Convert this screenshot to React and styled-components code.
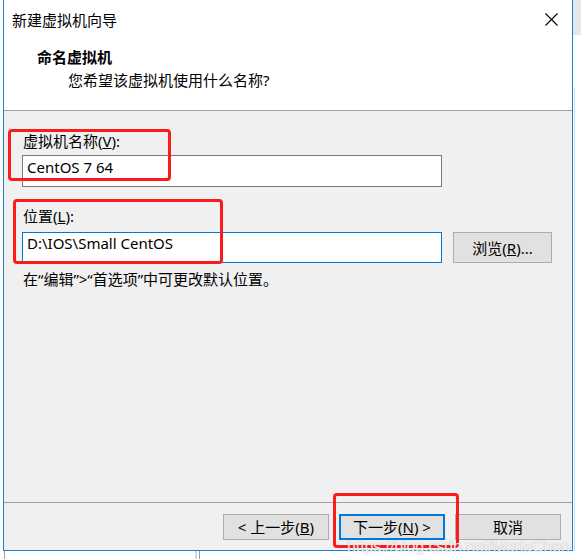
import React from "react";
import styled, { createGlobalStyle } from "styled-components";

const Global = createGlobalStyle`
  html, body { margin: 0; padding: 0; background: #ffffff; }
  body { font-family: "Noto Sans", "Noto Sans CJK SC", sans-serif; font-size: 15px; color: #000; }
  * { box-sizing: border-box; }
`;

const Page = styled.div`
  position: relative;
  width: 581px;
  height: 559px;
  overflow: hidden;
  display: flex;
  flex-direction: column;
  background: #ffffff;
`;

const MainRow = styled.div`
  display: flex;
  height: 551px;
`;

const LeftGap = styled.div`
  width: 3px;
  flex: none;
`;

const Window = styled.div`
  width: 570px;
  flex: none;
  display: flex;
  flex-direction: column;
  border-left: 1px solid #1a7fd4;
  border-right: 1px solid #1a7fd4;
  border-bottom: 1px solid #1a7fd4;
  background: #ffffff;
`;

const RightStrip = styled.div`
  flex: 1;
  display: flex;
  flex-direction: column;
`;

const StripTop = styled.div`
  height: 35px;
  background: #e6e6e6;
`;

const StripGap = styled.div`
  height: 53px;
`;

const StripLine = styled.div`
  flex: 1;
  margin-left: 1px;
  border-left: 1px solid #dadada;
`;

const BottomStrip = styled.div`
  height: 8px;
  display: flex;
`;

const VLine = styled.div`
  width: ${(p) => p.$w || 1}px;
  margin-left: ${(p) => p.$at}px;
  background: ${(p) => p.$c};
`;

const TitleBar = styled.div`
  height: 39px;
  display: flex;
  align-items: center;
  justify-content: space-between;
  padding-left: 8px;
  padding-right: 14px;
  line-height: 20px;
`;

const TitleText = styled.div`
  font-size: 15px;
  color: #000;
`;

const Header = styled.div`
  height: 72px;
  padding: 8px 0 0 33px;
  border-bottom: 1px solid #a0a0a0;
`;

const Heading = styled.div`
  font-weight: 700;
  line-height: 20px;
`;

const SubHeading = styled.div`
  line-height: 20px;
  margin-top: 3px;
  padding-left: 31px;
`;

const Content = styled.div`
  height: 392px;
  background: #f0f0f0;
  border-bottom: 1px solid #a0a0a0;
  padding: 20px 0 0 18px;
  display: flex;
  flex-direction: column;
`;

const Label = styled.div`
  line-height: 20px;
  padding-left: 1px;
  margin-top: ${(p) => p.$mt || 0}px;
  margin-bottom: ${(p) => p.$mb || 0}px;
`;

const TextBox = styled.div`
  width: 420px;
  height: ${(p) => p.$h}px;
  background: #ffffff;
  border: 1px solid ${(p) => (p.$focus ? "#0078d7" : "#7a7a7a")};
  padding: ${(p) => p.$pt}px 0 0 4px;
  line-height: 20px;
  white-space: nowrap;
`;

const Row = styled.div`
  display: flex;
  align-items: flex-start;
  gap: 11px;
`;

const Button = styled.div`
  width: ${(p) => p.$w}px;
  height: ${(p) => p.$h}px;
  background: #e1e1e1;
  border: ${(p) => (p.$default ? "2px solid #0078d7" : "1px solid #adadad")};
  display: flex;
  align-items: center;
  justify-content: center;
  line-height: 20px;
  white-space: nowrap;
  flex: none;
`;

const Hint = styled.div`
  line-height: 20px;
  margin-top: 6px;
  padding-left: 1px;
`;

const Footer = styled.div`
  flex: 1;
  background: #f0f0f0;
  display: flex;
  justify-content: flex-end;
  align-items: flex-start;
  gap: 10px;
  padding: 11px 11px 0 0;
`;

const Annotation = styled.div`
  position: absolute;
  left: ${(p) => p.$x}px;
  top: ${(p) => p.$y}px;
  width: ${(p) => p.$w}px;
  height: ${(p) => p.$h}px;
  border: 3px solid #fa1b1b;
  border-radius: 4px;
  pointer-events: none;
`;

const Watermark = styled.div`
  position: absolute;
  left: 347px;
  top: 537px;
  font-family: "Liberation Sans", Arial, sans-serif;
  font-size: 16px;
  line-height: 20px;
  color: rgba(255, 255, 255, 0.85);
  text-shadow: 0 0 1px rgba(110, 110, 110, 0.55);
  letter-spacing: -0.1px;
  white-space: nowrap;
  pointer-events: none;
`;

const CloseIcon = () => (
  <svg width="13" height="13" viewBox="0 0 13 13" aria-hidden="true">
    <path d="M0.5 0.5 L12.5 12.5 M12.5 0.5 L0.5 12.5" stroke="#000" strokeWidth="1.1" fill="none" />
  </svg>
);

export default function App() {
  return (
    <>
      <Global />
      <Page>
        <MainRow>
          <LeftGap />
          <Window>
            <TitleBar>
              <TitleText>新建虚拟机向导</TitleText>
              <CloseIcon />
            </TitleBar>
            <Header>
              <Heading>命名虚拟机</Heading>
              <SubHeading>您希望该虚拟机使用什么名称?</SubHeading>
            </Header>
            <Content>
              <Label $mb={4}>
                虚拟机名称(<u>V</u>):
              </Label>
              <TextBox $h={32} $pt={1}>CentOS 7 64</TextBox>
              <Label $mt={19} $mb={6}>
                位置(<u>L</u>):
              </Label>
              <Row>
                <TextBox $h={31} $pt={0} $focus>
                  D:\IOS\Small CentOS
                </TextBox>
                <Button $w={99} $h={31}>
                  浏览(<u>R</u>)...
                </Button>
              </Row>
              <Hint>在“编辑”&gt;“首选项”中可更改默认位置。</Hint>
            </Content>
            <Footer>
              <Button $w={106} $h={26}>
                &lt; 上一步(<u>B</u>)
              </Button>
              <Button $w={106} $h={26} $default>
                下一步(<u>N</u>) &gt;
              </Button>
              <Button $w={106} $h={26}>取消</Button>
            </Footer>
          </Window>
          <RightStrip>
            <StripTop />
            <StripGap />
            <StripLine />
          </RightStrip>
        </MainRow>
        <BottomStrip>
          <VLine $at={4} $c="#a0a0a0" />
          <VLine $at={190} $w={2} $c="#d8d8d8" />
          <VLine $at={2} $c="#9a9a9a" />
        </BottomStrip>
        <Annotation $x={8} $y={129} $w={163} $h={52} />
        <Annotation $x={13} $y={199} $w={210} $h={65} />
        <Annotation $x={333} $y={493} $w={126} $h={55} />
        <Watermark>https://blog.csdn.net/MeriaChen</Watermark>
      </Page>
    </>
  );
}
